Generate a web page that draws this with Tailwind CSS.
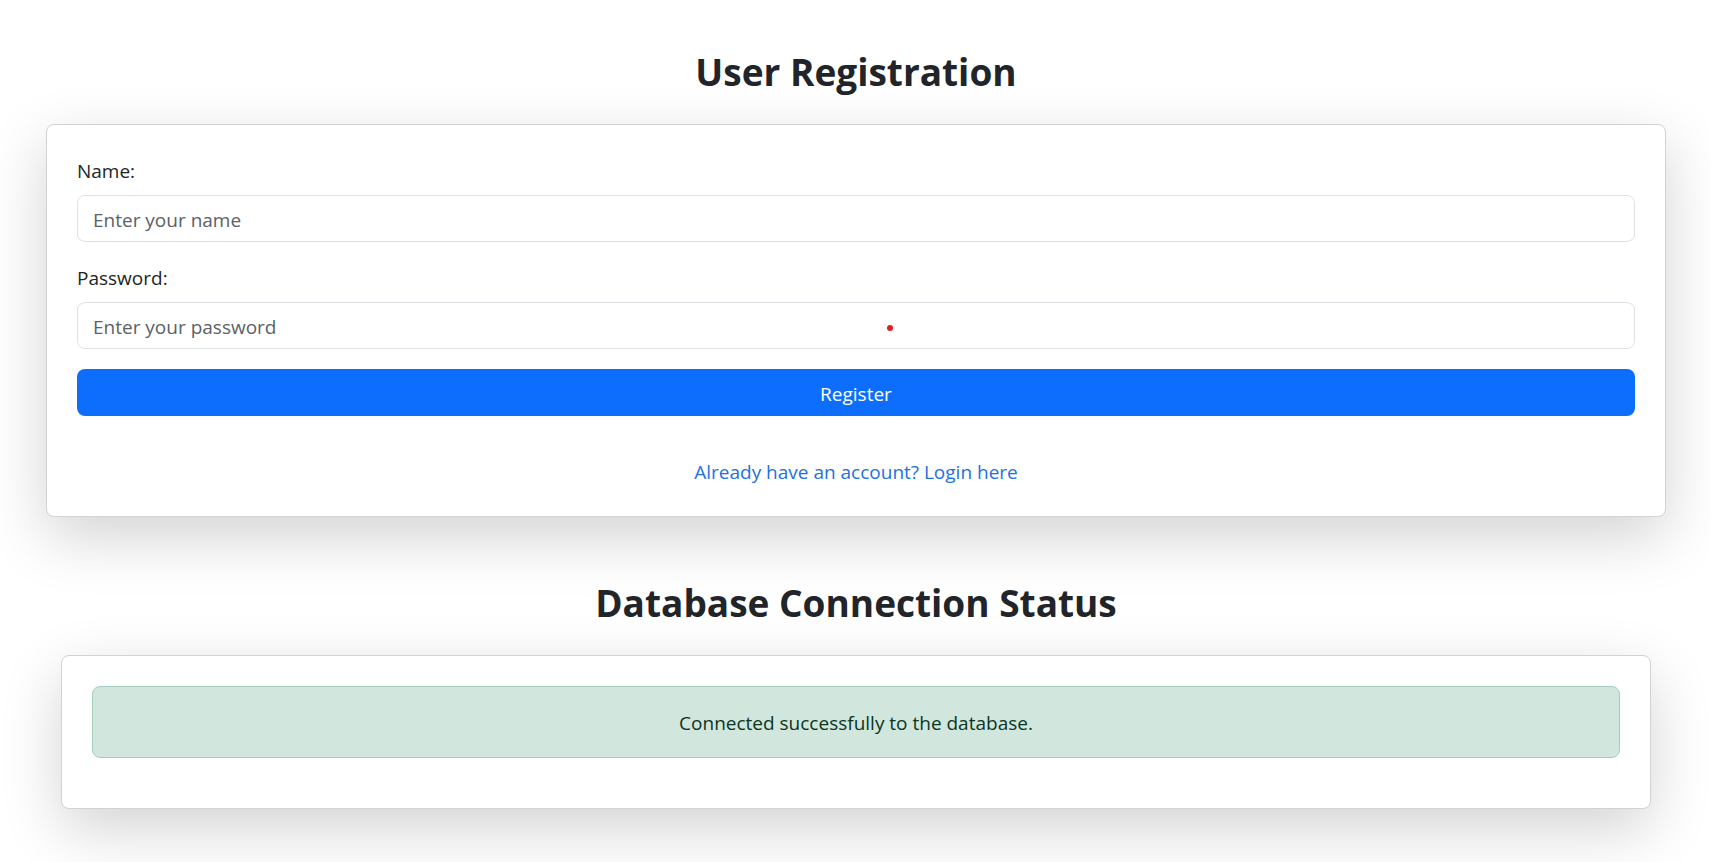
<!DOCTYPE html>
<html lang="en">
<head>
<meta charset="utf-8">
<title>User Registration</title>
<script src="https://cdn.jsdelivr.net/npm/@tailwindcss/browser@4"></script>
</head>
<body class="min-h-screen overflow-x-hidden bg-white pt-12 font-['Open_Sans',sans-serif] text-[19px] leading-[30px] text-[#212529]">
<main class="pr-[45px] pl-[46px]">
  <section>
    <h1 class="mb-7 text-center text-[37px] leading-12 font-bold">User Registration</h1>
    <form class="rounded-lg border border-[#d2d2d2] bg-white px-[30px] pt-[31px] pb-[29px] shadow-[0_20px_60px_rgba(0,0,0,0.175)]">
      <label for="name" class="mb-[9px] block">Name:</label>
      <input id="name" type="text" placeholder="Enter your name" class="mb-[21px] block h-[47px] w-full rounded-lg border border-[#dee2e6] bg-white px-[15px] pt-0.5 placeholder:text-[#5c6166]">
      <label for="password" class="mb-[9px] block">Password:</label>
      <div class="relative mb-5">
        <input id="password" type="password" placeholder="Enter your password" class="block h-[47px] w-full rounded-lg border border-[#dee2e6] bg-white px-[15px] pt-0.5 placeholder:text-[#5c6166]">
        <span class="absolute top-[23px] left-[52%] size-1.5 rounded-full bg-[#dc1f1f]"></span>
      </div>
      <button type="button" class="block h-[47px] w-full rounded-lg bg-[#0d6efd] pt-0.5 text-white">Register</button>
      <p class="mt-[41px] text-center"><a href="#login" class="text-[#1f6fe5]">Already have an account? Login here</a></p>
    </form>
  </section>
  <section class="mt-[62px] px-[15px]">
    <h2 class="mb-7 text-center text-[37px] leading-12 font-bold">Database Connection Status</h2>
    <div class="rounded-lg border border-[#d2d2d2] bg-white p-[30px] shadow-[0_20px_60px_rgba(0,0,0,0.175)]">
      <div role="alert" class="mb-5 rounded-lg border border-[#a3cfbb] bg-[#d1e7dd] px-5 pt-[21px] pb-[19px] text-center text-[#0a3622]">Connected successfully to the database.</div>
    </div>
  </section>
</main>
</body>
</html>
